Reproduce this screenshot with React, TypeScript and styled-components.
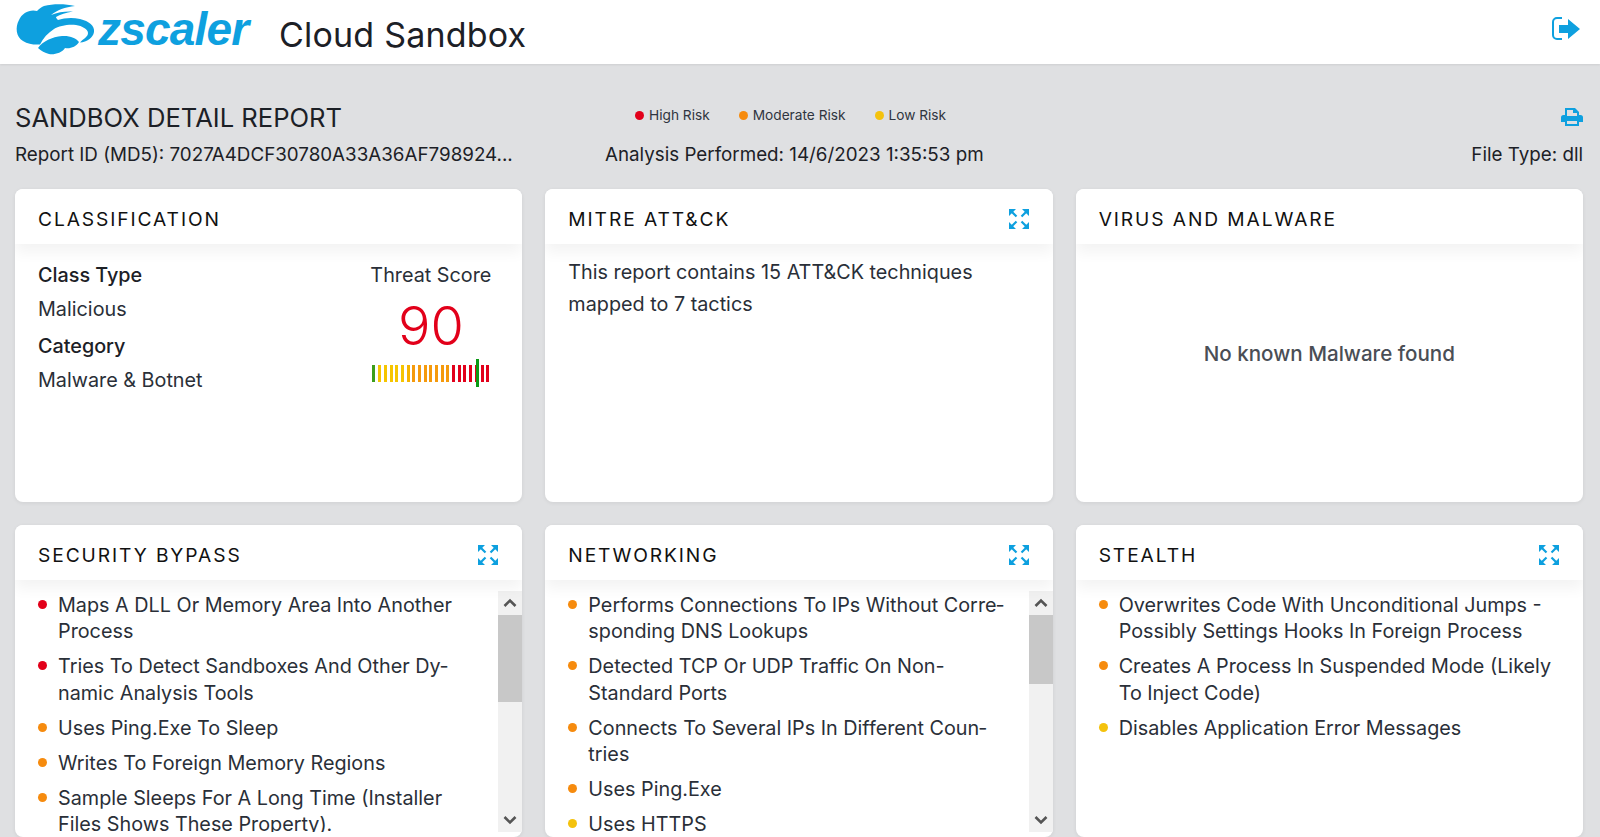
import styled, { createGlobalStyle } from 'styled-components';

const GlobalStyle = createGlobalStyle`
    html, body {
        margin: 0;
        height: 100%;
        overflow: hidden;
    }
    body {
        font-family: Inter, "Liberation Sans", sans-serif;
        color: #1c2026;
        background: #dfe0e2;
    }
`;

const Page = styled.div`
    height: 837px;
    overflow: hidden;
    background: #dfe0e2;
`;

const TopBar = styled.header`
    height: 64px;
    background: #fff;
    display: flex;
    align-items: center;
    padding: 0 19px 0 10px;
    box-shadow: 0 1px 2px rgba(0, 0, 0, 0.08);
`;

const Product = styled.div`
    font-size: 34px;
    margin-left: 19px;
    margin-top: 5px;
    flex: 1;
    letter-spacing: 0.2px;
`;

const LogoutWrap = styled.div`
    display: flex;
    margin-bottom: 6px;
`;

const Report = styled.section`
    padding: 38px 17px 0 15px;
`;

const TitleRow = styled.div`
    display: grid;
    grid-template-columns: 620px 1fr 30px;
    align-items: center;
    height: 28px;
`;

const Title = styled.h1`
    margin: 0;
    font-size: 25.6px;
    font-weight: 400;
`;

const Legend = styled.div`
    display: flex;
    gap: 29px;
    margin-top: -5px;
    font-size: 13.7px;
    color: #2f3540;
`;

const LegendItem = styled.span`
    display: flex;
    align-items: baseline;
    gap: 5px;
`;

const Dot = styled.i<{ $level: 'high' | 'moderate' | 'low' }>`
    width: 9px;
    height: 9px;
    border-radius: 50%;
    flex-shrink: 0;
    background: ${(p) => (p.$level === 'high' ? '#e2001a' : p.$level === 'moderate' ? '#f68b0e' : '#f4c20d')};
`;

const MetaRow = styled.div`
    display: grid;
    grid-template-columns: 590px 1fr auto;
    margin-top: 13px;
    font-size: 18.8px;
    line-height: 24px;
`;

const PrintWrap = styled.div`
    display: flex;
    justify-content: flex-end;
    margin-bottom: 2px;
`;

const Grid = styled.div`
    display: grid;
    grid-template-columns: repeat(3, 1fr);
    grid-template-rows: 313px 312px;
    gap: 23px;
    margin-top: 22px;
`;

const Card = styled.article`
    background: #fff;
    border-radius: 8px;
    overflow: hidden;
    display: flex;
    flex-direction: column;
    min-height: 0;
    box-shadow: 0 1px 4px rgba(0, 0, 0, 0.07);
`;

const CardHead = styled.div`
    box-sizing: border-box;
    height: 55px;
    flex-shrink: 0;
    display: flex;
    align-items: center;
    justify-content: space-between;
    padding: 5px 23px 0;
    background: #fff;
    box-shadow: 0 8px 14px rgba(0, 0, 0, 0.05);
    position: relative;
`;

const CardTitle = styled.h2`
    margin: 0;
    font-size: 19.2px;
    font-weight: 400;
    letter-spacing: 1.9px;
    color: #111;
`;

const Classification = styled.div`
    display: flex;
    justify-content: space-between;
    padding: 18px 31px 0 23px;
    font-size: 19.8px;
`;

const ClassLabel = styled.div`
    font-weight: 500;
    line-height: 26px;
`;

const ClassValue = styled.div`
    line-height: 26px;
    margin: 8px 0 11px;
    color: #2a2f38;
`;

const Score = styled.div`
    display: flex;
    flex-direction: column;
    align-items: center;
    color: #2a2f38;
`;

const ScoreLabel = styled.div`
    line-height: 26px;
`;

const ScoreNumber = styled.div`
    font-size: 54px;
    font-weight: 300;
    line-height: 60px;
    color: #e2001a;
    margin-top: 8px;
`;

const Gauge = styled.div`
    position: relative;
    display: flex;
    gap: 2.7px;
    height: 17px;
    margin-top: 9px;
`;

const Tick = styled.i<{ $color: string }>`
    width: 3px;
    background: ${(p) => p.$color};
`;

const GaugeMarker = styled.i`
    position: absolute;
    left: 104px;
    top: -6px;
    width: 3px;
    height: 28px;
    background: #0a9a14;
`;

const Paragraph = styled.p`
    margin: 0;
    padding: 12px 23px;
    font-size: 19.8px;
    line-height: 32px;
    color: #2a2f38;
`;

const Empty = styled.div`
    flex: 1;
    display: flex;
    align-items: center;
    justify-content: center;
    padding-bottom: 40px;
    font-size: 20.6px;
    font-weight: 500;
    color: #4a4e55;
`;

const ListArea = styled.div`
    flex: 1;
    min-height: 0;
    display: flex;
    padding-top: 11px;
`;

const Findings = styled.ul`
    flex: 1;
    margin: 0;
    padding: 0.5px 18px 0 23px;
    list-style: none;
    overflow: hidden;
    height: 240px;
`;

const Finding = styled.li`
    display: flex;
    gap: 11px;
    font-size: 19.8px;
    line-height: 26.5px;
    margin-bottom: 8.5px;
    color: #2a2f38;
    & > i {
        margin-top: 8px;
    }
`;

const Track = styled.div`
    width: 24px;
    height: 241px;
    flex-shrink: 0;
    background: #f1f1f1;
    display: flex;
    flex-direction: column;
    align-items: center;
`;

const TrackArrow = styled.div`
    height: 24px;
    display: flex;
    align-items: center;
    justify-content: center;
    flex-shrink: 0;
`;

const TrackBody = styled.div`
    flex: 1;
    width: 100%;
`;

const Thumb = styled.div<{ $height: number }>`
    width: 100%;
    height: ${(p) => p.$height}px;
    background: #c8c8c8;
`;

const Expand = () => (
    <svg width="22" height="22" viewBox="0 0 22 22" fill="#0ea0df" stroke="#0ea0df">
        <path strokeWidth="0" d="M1 1h7L1 8zM21 1v7l-7-7zM1 21v-7l7 7zM21 21h-7l7-7z" />
        <path strokeWidth="2.2" d="M3 3l5.500 5.500M19 3l-5.500 5.500M3 19l5.500-5.500M19 19l-5.500-5.500" />
    </svg>
);

const Chevron = ({ up }: { up?: boolean }) => (
    <svg width="14" height="10" viewBox="0 0 14 10" fill="none" stroke="#555" strokeWidth="2.6">
        <path d={up ? 'M1.5 8 7 2.5 12.5 8' : 'M1.5 2 7 7.5 12.5 2'} />
    </svg>
);

const Logo = () => (
    <svg width="250" height="64" viewBox="0 0 250 64">
        <path
            fill="#0ea0df"
            d="M65 6C55 3.500 43 3.500 34 6 31 7 29 9 27 11 20 9 12 13 9 20 5 27 6 37 13 41 18 44 24 45 30 44.500 33 38 38 33 44 29 49 26 58 24 66 25 72 26 78 29 78 33 78 37 73 39 70 42.500 77 42 83 38 84 32 85 26 79 21 70 19 62 17 54 18 48 20 47 19 46 18 46 17 50 14.500 56 12.500 63 11.500 56 11 48 12 41 15 47 10 55 7 65 6Z"
        />
        <path
            fill="#0ea0df"
            d="M28 48C33 41 42 37 52 36 60 35.500 66 38 69 42 66 47 60 49 55 48 52 53 44 55 39 54 35 53 31 51 28 48Z"
        />
        <text x="88" y="45" fill="#0ea0df" fontFamily="Liberation Sans, sans-serif" fontStyle="italic" fontWeight="700" fontSize="46" letterSpacing="-0.8">
            zscaler
        </text>
    </svg>
);

const Logout = () => (
    <svg width="30" height="26" viewBox="0 0 30 26">
        <path fill="none" stroke="#0ea0df" strokeWidth="2" d="M11 2H6a4 4 0 0 0-4 4v13a4 4 0 0 0 4 4h5" />
        <path fill="#0ea0df" d="M8 9h9V3l12 10-12 10v-6H8z" />
    </svg>
);

const Printer = () => (
    <svg width="22" height="20" viewBox="0 0 22 20">
        <path
            fill="#0ea0df"
            fillRule="evenodd"
            d="M4 1h10l4 4v3h1.500A2.500 2.500 0 0 1 22 10.500V15h-4v4H4v-4H0v-4.500A2.500 2.500 0 0 1 2.500 8H4zM6 3v6h10V6h-4V3zM6 14v3h10v-3z"
        />
    </svg>
);

const tickColors = [
    '#3d9e1a', '#f6c500', '#f6c500', '#f6c500', '#f6c500', '#f6c500', '#f6b400', '#f59a0c', '#f59a0c', '#f59a0c',
    '#f59a0c', '#f59a0c', '#f59a0c', '#f59a0c', '#e2001a', '#e2001a', '#e2001a', '#e2001a', '#e2001a', '#e2001a', '#e2001a',
];

type Level = 'high' | 'moderate' | 'low';
type Item = { level: Level; text: string };

const panels: { title: string; thumb?: number; items: Item[] }[] = [
    {
        title: 'SECURITY BYPASS',
        thumb: 87,
        items: [
            { level: 'high', text: 'Maps A DLL Or Memory Area Into Another Process' },
            { level: 'high', text: 'Tries To Detect Sandboxes And Other Dy\u00ADnamic Analysis Tools' },
            { level: 'moderate', text: 'Uses Ping.Exe To Sleep' },
            { level: 'moderate', text: 'Writes To Foreign Memory Regions' },
            { level: 'moderate', text: 'Sample Sleeps For A Long Time (Installer Files Shows These Property).' },
        ],
    },
    {
        title: 'NETWORKING',
        thumb: 69,
        items: [
            { level: 'moderate', text: 'Performs Connections To IPs Without Corre\u00ADsponding DNS Lookups' },
            { level: 'moderate', text: 'Detected TCP Or UDP Traffic On Non-Standard Ports' },
            { level: 'moderate', text: 'Connects To Several IPs In Different Coun\u00ADtries' },
            { level: 'moderate', text: 'Uses Ping.Exe' },
            { level: 'low', text: 'Uses HTTPS' },
        ],
    },
    {
        title: 'STEALTH',
        items: [
            { level: 'moderate', text: 'Overwrites Code With Unconditional Jumps - Possibly Settings Hooks In Foreign Process' },
            { level: 'moderate', text: 'Creates A Process In Suspended Mode (Likely To Inject Code)' },
            { level: 'low', text: 'Disables Application Error Messages' },
        ],
    },
];

export default function App() {
    return (
        <Page>
            <GlobalStyle />
            <TopBar>
                <Logo />
                <Product>Cloud Sandbox</Product>
                <LogoutWrap><Logout /></LogoutWrap>
            </TopBar>
            <Report>
                <TitleRow>
                    <Title>SANDBOX DETAIL REPORT</Title>
                    <Legend>
                        <LegendItem><Dot $level="high" />High Risk</LegendItem>
                        <LegendItem><Dot $level="moderate" />Moderate Risk</LegendItem>
                        <LegendItem><Dot $level="low" />Low Risk</LegendItem>
                    </Legend>
                    <PrintWrap><Printer /></PrintWrap>
                </TitleRow>
                <MetaRow>
                    <div>Report ID (MD5): 7027A4DCF30780A33A36AF798924...</div>
                    <div>Analysis Performed: 14/6/2023 1:35:53 pm</div>
                    <div>File Type: dll</div>
                </MetaRow>
                <Grid>
                    <Card>
                        <CardHead><CardTitle>CLASSIFICATION</CardTitle></CardHead>
                        <Classification>
                            <div>
                                <ClassLabel>Class Type</ClassLabel>
                                <ClassValue>Malicious</ClassValue>
                                <ClassLabel>Category</ClassLabel>
                                <ClassValue>Malware &amp; Botnet</ClassValue>
                            </div>
                            <Score>
                                <ScoreLabel>Threat Score</ScoreLabel>
                                <ScoreNumber>90</ScoreNumber>
                                <Gauge>
                                    {tickColors.map((color, i) => <Tick key={i} $color={color} />)}
                                    <GaugeMarker />
                                </Gauge>
                            </Score>
                        </Classification>
                    </Card>
                    <Card>
                        <CardHead><CardTitle>MITRE ATT&amp;CK</CardTitle><Expand /></CardHead>
                        <Paragraph>This report contains 15 ATT&amp;CK techniques mapped to 7 tactics</Paragraph>
                    </Card>
                    <Card>
                        <CardHead><CardTitle>VIRUS AND MALWARE</CardTitle></CardHead>
                        <Empty>No known Malware found</Empty>
                    </Card>
                    {panels.map((panel) => (
                        <Card key={panel.title}>
                            <CardHead><CardTitle>{panel.title}</CardTitle><Expand /></CardHead>
                            <ListArea>
                                <Findings>
                                    {panel.items.map((item) => (
                                        <Finding key={item.text}>
                                            <Dot $level={item.level} />
                                            <span>{item.text}</span>
                                        </Finding>
                                    ))}
                                </Findings>
                                {panel.thumb && (
                                    <Track>
                                        <TrackArrow><Chevron up /></TrackArrow>
                                        <Thumb $height={panel.thumb} />
                                        <TrackBody />
                                        <TrackArrow><Chevron /></TrackArrow>
                                    </Track>
                                )}
                            </ListArea>
                        </Card>
                    ))}
                </Grid>
            </Report>
        </Page>
    );
}
